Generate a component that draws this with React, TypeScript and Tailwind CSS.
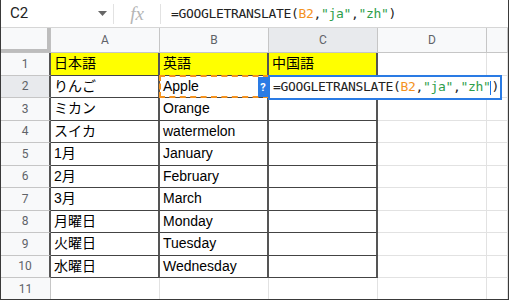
import React from "react";

const rows: string[][] = [
  ["日本語", "英語", "中国語"],
  ["りんご", "Apple", ""],
  ["ミカン", "Orange", ""],
  ["スイカ", "watermelon", ""],
  ["1月", "January", ""],
  ["2月", "February", ""],
  ["3月", "March", ""],
  ["月曜日", "Monday", ""],
  ["火曜日", "Tuesday", ""],
  ["水曜日", "Wednesday", ""],
];

const cellFont = {
  fontFamily: '"Liberation Sans", "Noto Sans CJK JP", Arial, sans-serif',
};

function Formula() {
  return (
    <>
      <span className="text-[#222]">=GOOGLETRANSLATE(</span>
      <span className="text-[#f4921e]">B2</span>
      <span className="text-[#222]">,</span>
      <span className="text-[#2e9e4a]">"ja"</span>
      <span className="text-[#222]">,</span>
      <span className="text-[#2e9e4a]">"zh"</span>
    </>
  );
}

export default function App() {
  const headerCols = ["A", "B", "C", "D", ""];
  return (
    <div
      className="w-[509px] h-[300px] overflow-hidden bg-white border-l border-r border-b border-[#3a3a3a] flex flex-col relative"
      style={{ fontFamily: 'Roboto, "Liberation Sans", Arial, sans-serif' }}
    >
      {/* formula bar */}
      <div className="h-[28px] shrink-0 flex items-center border-b border-[#d6d6d6] bg-white">
        <div className="w-[112px] flex items-center justify-between pl-[9px] pr-[6px]">
          <span className="text-[15px] text-[#222] leading-none">C2</span>
          <svg width="9" height="5" viewBox="0 0 9 5">
            <path d="M0 0 L9 0 L4.5 5 Z" fill="#666" />
          </svg>
        </div>
        <div className="w-px h-[20px] bg-[#e2e2e2]" />
        <div className="w-[46px] flex items-center justify-center">
          <span
            className="text-[19px] text-[#b5b5b5] italic leading-none"
            style={{ fontFamily: '"Liberation Serif", serif' }}
          >
            fx
          </span>
        </div>
        <div className="w-px h-[20px] bg-[#e2e2e2]" />
        <div
          className="pl-[10px] text-[13px] tracking-[-0.33px] leading-none"
          style={{ fontFamily: '"DejaVu Sans Mono", monospace' }}
        >
          <Formula />
          <span className="text-[#222]">)</span>
        </div>
      </div>

      {/* grid */}
      <div className="grid grid-cols-[50px_109px_109px_109px_109px_1fr]">
        {/* column header */}
        <div className="h-[25px] bg-[#f8f9fa] border-r border-b border-[#c0c0c0] relative">
          <div className="absolute right-0 top-0 w-[3px] h-full bg-[#bdbdbd]" />
          <div className="absolute left-0 bottom-0 h-[3px] w-full bg-[#bdbdbd]" />
        </div>
        {headerCols.map((c, i) => (
          <div
            key={c + i}
            className={`h-[25px] flex items-center justify-center text-[12px] text-[#5f6368] border-r border-b border-[#c6c6c6] ${
              c === "C" ? "bg-[#e8eaed]" : "bg-[#f8f9fa]"
            }`}
          >
            {c}
          </div>
        ))}

        {Array.from({ length: 11 }).map((_, r) => {
          const data = rows[r];
          return (
            <React.Fragment key={r}>
              <div
                className={`h-[22.5px] flex items-center justify-center text-[12px] text-[#5f6368] border-b border-[#c6c6c6] ${
                  r < 10 ? "border-r-2 border-r-[#555]" : "border-r border-r-[#c6c6c6]"
                } ${r === 1 ? "bg-[#e8eaed]" : "bg-[#f8f9fa]"}`}
              >
                {r + 1}
              </div>
              {[0, 1, 2, 3, 4].map((c) => {
                const inTable = data && c < 3;
                const bg = r === 0 && c < 3 ? "bg-[#ffff00]" : "bg-white";
                const right = inTable
                  ? "border-r-2 border-r-[#555]"
                  : "border-r border-r-[#e2e2e2]";
                const bottom = inTable
                  ? "border-b border-b-[#444]"
                  : "border-b border-b-[#e2e2e2]";
                return (
                  <div
                    key={c}
                    className={`h-[22.5px] relative flex items-center pl-[3px] text-[14px] text-black whitespace-nowrap ${bg} ${right} ${bottom}`}
                    style={cellFont}
                  >
                    {inTable ? data[c] : ""}
                    {r === 1 && c === 1 && (
                      <div className="absolute -left-px -top-px right-[-2px] bottom-[-1px] border-[length:2px] border-dashed border-[color:#f4921e]" />
                    )}
                  </div>
                );
              })}
            </React.Fragment>
          );
        })}
      </div>

      {/* cell editor overlay */}
      <div className="absolute left-[267px] top-[75px] w-[234px] h-[25px] border-2 border-[#2a7be4] bg-white flex items-center pl-[3px]">
        <span
          className="text-[13px] tracking-[-0.33px] leading-none"
          style={{ fontFamily: '"DejaVu Sans Mono", monospace' }}
        >
          <Formula />
          <span className="inline-block w-px h-[14px] bg-[#1a73e8] align-middle" />
          <span className="text-[#222]">)</span>
        </span>
      </div>
      <div className="absolute left-[257px] top-[77px] w-[10px] h-[20px] bg-[#2a7be4] flex items-center justify-center">
        <span className="text-white text-[11px] font-bold leading-none">?</span>
      </div>
    </div>
  );
}
